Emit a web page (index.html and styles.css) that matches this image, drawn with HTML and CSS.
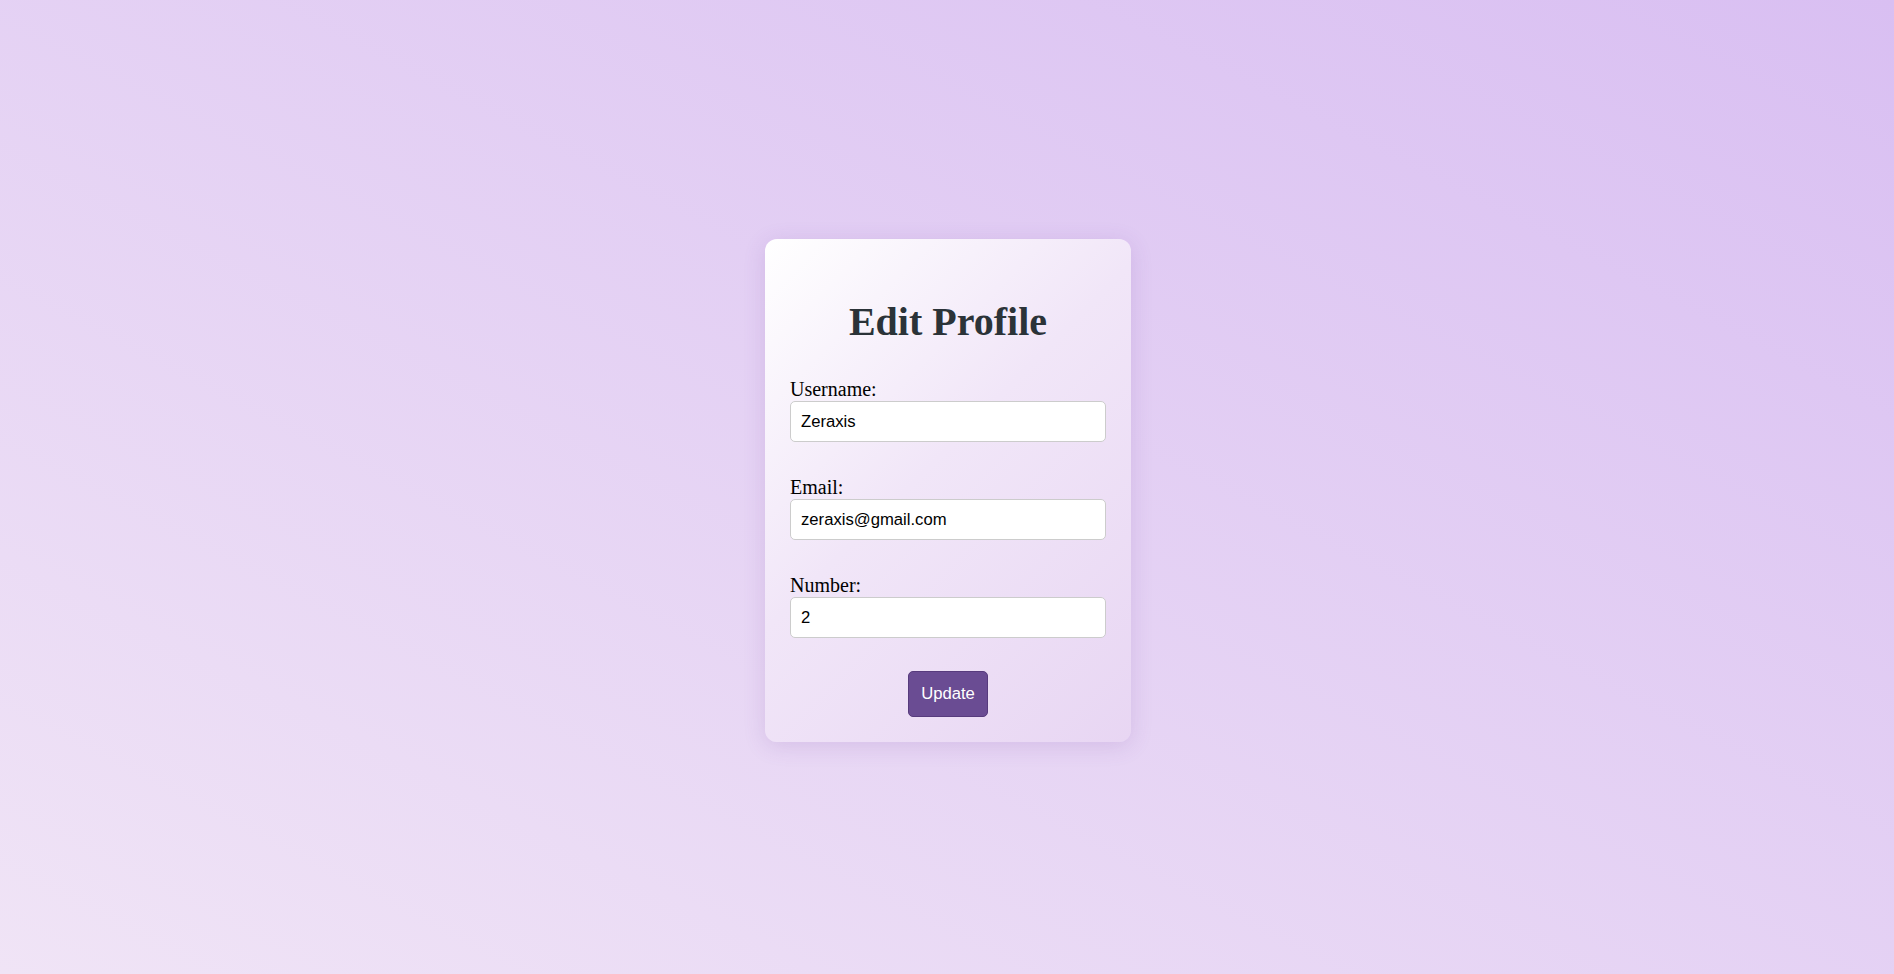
FILE: index.html
```html
<!DOCTYPE html>
<html lang="en">
<head>
<meta charset="utf-8">
<title>Edit Profile</title>
<link rel="stylesheet" href="styles.css">
</head>
<body>
<main class="page">
  <section class="card">
    <h1 class="title">Edit Profile</h1>
    <form class="form">
      <div class="field">
        <label class="label" for="username">Username:</label>
        <input class="input" id="username" type="text" value="Zeraxis">
      </div>
      <div class="field">
        <label class="label" for="email">Email:</label>
        <input class="input" id="email" type="email" value="zeraxis@gmail.com">
      </div>
      <div class="field">
        <label class="label" for="number">Number:</label>
        <input class="input" id="number" type="text" value="2">
      </div>
      <div class="actions">
        <button class="button" type="button">Update</button>
      </div>
    </form>
  </section>
</main>
</body>
</html>
```

FILE: styles.css
```css
* {
  box-sizing: border-box;
}

html, body {
  margin: 0;
  padding: 0;
}

body {
  font-family: "Liberation Serif", "Times New Roman", serif;
  background: linear-gradient(to top right, #f0e4f6 0%, #d9bff2 100%);
  min-height: 100vh;
}

.page {
  min-height: 100vh;
  padding-top: 7px;
  padding-left: 2px;
  display: flex;
  align-items: center;
  justify-content: center;
}

.card {
  width: 366px;
  padding: 25px;
  border-radius: 12px;
  background: linear-gradient(135deg, #ffffff 0%, #f1e6f8 45%, #e8d6f3 100%);
  box-shadow: 0 4px 22px rgba(110, 60, 160, 0.16);
}

.title {
  margin: 35px 0 33px;
  font-size: 40px;
  line-height: 46px;
  font-weight: bold;
  text-align: center;
  color: #2b3338;
}

.form {
  display: flex;
  flex-direction: column;
}

.field {
  display: flex;
  flex-direction: column;
}

.field + .field {
  margin-top: 34px;
}

.label {
  display: block;
  font-size: 20px;
  line-height: 23px;
  color: #000;
}

.input {
  width: 100%;
  height: 41px;
  padding: 0 10px;
  border: 1px solid #cccccc;
  border-radius: 5px;
  background: #ffffff;
  font-family: "Liberation Sans", Arial, sans-serif;
  font-size: 16.67px;
  color: #000;
}

.actions {
  margin-top: 33px;
  display: flex;
  justify-content: center;
}

.button {
  width: 80px;
  height: 46px;
  padding: 0;
  border: 1px solid #573b7d;
  border-radius: 5px;
  background: #6a4c93;
  color: #ffffff;
  font-family: "Liberation Sans", Arial, sans-serif;
  font-size: 16.67px;
}
```
